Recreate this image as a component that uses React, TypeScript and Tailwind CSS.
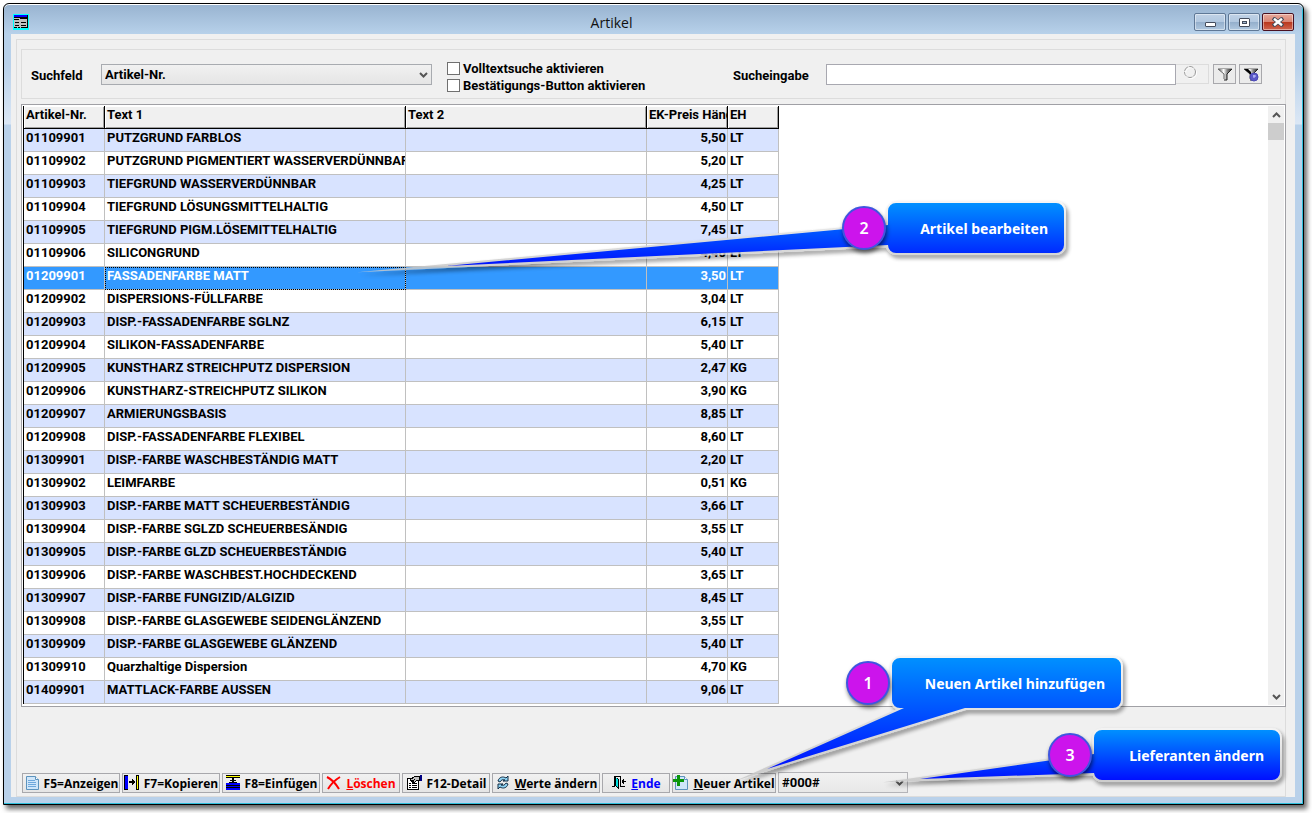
import { useState } from "react";
import type { ReactNode } from "react";

type Artikel = [nr: string, text: string, preis: string, einheit: string];

const artikel: Artikel[] = [
  ["01109901", "PUTZGRUND FARBLOS", "5,50", "LT"],
  ["01109902", "PUTZGRUND PIGMENTIERT WASSERVERDÜNNBAR", "5,20", "LT"],
  ["01109903", "TIEFGRUND WASSERVERDÜNNBAR", "4,25", "LT"],
  ["01109904", "TIEFGRUND LÖSUNGSMITTELHALTIG", "4,50", "LT"],
  ["01109905", "TIEFGRUND PIGM.LÖSEMITTELHALTIG", "7,45", "LT"],
  ["01109906", "SILICONGRUND", "4,40", "LT"],
  ["01209901", "FASSADENFARBE MATT", "3,50", "LT"],
  ["01209902", "DISPERSIONS-FÜLLFARBE", "3,04", "LT"],
  ["01209903", "DISP.-FASSADENFARBE SGLNZ", "6,15", "LT"],
  ["01209904", "SILIKON-FASSADENFARBE", "5,40", "LT"],
  ["01209905", "KUNSTHARZ STREICHPUTZ DISPERSION", "2,47", "KG"],
  ["01209906", "KUNSTHARZ-STREICHPUTZ SILIKON", "3,90", "KG"],
  ["01209907", "ARMIERUNGSBASIS", "8,85", "LT"],
  ["01209908", "DISP.-FASSADENFARBE FLEXIBEL", "8,60", "LT"],
  ["01309901", "DISP.-FARBE WASCHBESTÄNDIG MATT", "2,20", "LT"],
  ["01309902", "LEIMFARBE", "0,51", "KG"],
  ["01309903", "DISP.-FARBE MATT SCHEUERBESTÄNDIG", "3,66", "LT"],
  ["01309904", "DISP.-FARBE SGLZD SCHEUERBESÄNDIG", "3,55", "LT"],
  ["01309905", "DISP.-FARBE GLZD SCHEUERBESTÄNDIG", "5,40", "LT"],
  ["01309906", "DISP.-FARBE WASCHBEST.HOCHDECKEND", "3,65", "LT"],
  ["01309907", "DISP.-FARBE FUNGIZID/ALGIZID", "8,45", "LT"],
  ["01309908", "DISP.-FARBE GLASGEWEBE SEIDENGLÄNZEND", "3,55", "LT"],
  ["01309909", "DISP.-FARBE GLASGEWEBE GLÄNZEND", "5,40", "LT"],
  ["01309910", "Quarzhaltige Dispersion", "4,70", "KG"],
  ["01409901", "MATTLACK-FARBE AUSSEN", "9,06", "LT"],
];

const columns = ["Artikel-Nr.", "Text 1", "Text 2", "EK-Preis Händler", "EH"];

const Chevron = ({ className = "" }: { className?: string }) => (
  <svg viewBox="0 0 9 6" className={`h-[6px] w-[9px] ${className}`} aria-hidden="true">
    <path d="M1 1l3.5 3.5L8 1" fill="none" stroke="#555" strokeWidth="2" />
  </svg>
);

const TableIcon = () => (
  <svg viewBox="0 0 16 16" className="h-4 w-4" shapeRendering="crispEdges" aria-hidden="true">
    <path fill="#00ffff" d="M0 0h16v16H0z" />
    <path fill="#c0c0c0" d="M1 1h14v13H1z" />
    <path fill="#0000ff" d="M1 1h14v2H1z" />
    <path
      fill="#000"
      d="M14 1h1v13h-1zM1 3h13v1H1zM1 5h5v1H1zM7 4h7v1H7zM2 8h4v1H2zM8 8h5v1H8zM2 11h4v1H2zM8 11h5v1H8zM1 13h3v1H1zM5 13h2v1H5zM8 13h6v1H8z"
    />
  </svg>
);

const FunnelIcon = ({ marked = false }: { marked?: boolean }) => (
  <svg viewBox="0 0 16 16" className="h-4 w-4" aria-hidden="true">
    <defs>
      <linearGradient id="funnel" x1="0" x2="1">
        <stop offset="0" stopColor="#444" />
        <stop offset="0.4" stopColor="#fff" />
        <stop offset="0.65" stopColor="#888" />
        <stop offset="1" stopColor="#222" />
      </linearGradient>
    </defs>
    <path d="M1 3h14L10 8v6H7V8z" fill="url(#funnel)" />
    <path d="M1 3l6 5v5" fill="none" stroke="#666" />
    <path d="M15 3l-5 5v6H7" fill="none" stroke="#222" />
    <path d="M1 2.5h14" stroke="#a8a8a8" />
    {marked && (
      <>
        <path d="M1 3l7 6V6L5 3z" fill="#000" />
        <circle cx="11" cy="11" r="4" fill="#5a58c8" />
        <circle cx="11" cy="11" r="4" fill="none" stroke="#4a48b4" />
        <path d="M11 9v3M10 10h3" stroke="#c4c8ff" />
      </>
    )}
  </svg>
);

const PageIcon = ({ plus = false }: { plus?: boolean }) => (
  <svg viewBox="0 0 16 16" className="h-4 w-4" aria-hidden="true">
    <path d="M2.500 1.500h9l3 3v10h-12z" fill="#cfe6fa" stroke="#5d93bd" />
    <path d="M11.500 1.500v3h3" fill="#fff" stroke="#5d93bd" />
    {plus ? (
      <path d="M5.500 0v11M0 5.500h11" stroke="#0a960a" strokeWidth="3" />
    ) : (
      <path d="M4 5.500h7M4 7.500h8M4 9.500h8M4 11.500h8" stroke="#6fa8dc" />
    )}
  </svg>
);

const CopyIcon = () => (
  <svg viewBox="0 0 16 16" className="h-4 w-4" shapeRendering="crispEdges" aria-hidden="true">
    <path fill="#000" d="M0 0h4v15H0zM12 0h3v15h-3zM5 6h5v2H5zM8 4h1v6H8zM9 5h1v4H9zM10 6h1v2h-1z" />
    <path fill="#0000ff" d="M1 1h3v13H1z" />
    <path fill="#ffff00" d="M13 1h1v13h-1z" />
  </svg>
);

const InsertIcon = () => (
  <svg viewBox="0 0 16 16" className="h-4 w-4" shapeRendering="crispEdges" aria-hidden="true">
    <path fill="#000" d="M1 0h14v3H1zM7 3h2v4H7zM5 5h6v1H5zM4 7h8v1H4zM1 8h14v7H1z" />
    <path fill="#ffff00" d="M1 1h14v1H1z" />
    <path fill="#0000ff" d="M1 8h14v2H1zM1 11h14v1H1zM1 13h14v2H1z" />
  </svg>
);

const DeleteIcon = () => (
  <svg viewBox="0 0 16 16" className="h-4 w-4" aria-hidden="true">
    <path d="M1 2c4 2 9 7 12 12" fill="none" stroke="#f00" strokeWidth="2" />
    <path d="M14 2C9 5 5 9 2 14" fill="none" stroke="#f00" strokeWidth="2" />
  </svg>
);

const DetailIcon = () => (
  <svg viewBox="0 0 17 16" className="h-4 w-[17px]" shapeRendering="crispEdges" aria-hidden="true">
    <path d="M1.500 3.500h11v11h-11z" fill="#fff" stroke="#000" />
    <path d="M3 8.500h2M6 8.500h5M3 10.500h2M6 10.500h5M3 12.500h2M6 12.500h5" stroke="#000" />
    <path d="M4.500 4.500l4-3h5v4h-3l-2 2h-2l1-2-2 1z" fill="#c0c0c0" stroke="#000" />
    <path d="M14 0h2v6h-2z" fill="#000080" />
  </svg>
);

const RefreshIcon = () => (
  <svg viewBox="0 0 16 16" className="h-4 w-4" aria-hidden="true">
    <path d="M3 6c1-4 5-5 8-3l2-2v5H8l2-1C8 4 6 5 5 7z" fill="#8fd4f4" stroke="#122c44" />
    <path d="M13 9c-1 4-5 5-8 3l-2 2V9h5l-2 1c2 1 4 0 5-2z" fill="#8fd4f4" stroke="#122c44" />
  </svg>
);

const DoorIcon = () => (
  <svg viewBox="0 0 16 16" className="h-4 w-4" shapeRendering="crispEdges" aria-hidden="true">
    <path fill="#000" d="M3 1h7v1H3zM3 1h1v11H3zM9 1h1v11H9zM1 11h3v1H1zM9 11h5v1H9z" />
    <path fill="#000" d="M4 2l4 2v11l-4-4z" />
    <path fill="#00e0e0" d="M5 3l2 2v8l-2-2z" />
    <path fill="#000" d="M11 6h4v1h-4zM11 5h1v3h-1zM12 4h1v5h-1z" />
  </svg>
);

function CaptionButton({
  label,
  close = false,
  children,
}: {
  label: string;
  close?: boolean;
  children: ReactNode;
}) {
  return (
    <button
      type="button"
      aria-label={label}
      className={`flex h-[18px] w-8 items-center justify-center rounded-[2px] border shadow-[inset_0_0_0_1px_rgba(255,255,255,0.45)] ${
        close
          ? "border-[#4a1020] bg-[linear-gradient(#e8a99c_0%,#d98574_48%,#b8361c_50%,#d0644f_100%)]"
          : "border-[#5f7896] bg-[linear-gradient(#c0d2e6_0%,#b2c8e0_48%,#93aecb_50%,#b0c8e0_100%)]"
      }`}
    >
      {children}
    </button>
  );
}

function ToolButton({
  icon,
  className,
  children,
}: {
  icon: ReactNode;
  className: string;
  children: ReactNode;
}) {
  return (
    <button
      type="button"
      className={`flex h-5 items-center justify-center gap-1 whitespace-nowrap border border-[#a8a8ac] bg-linear-to-b from-[#f1f1f1] to-[#e5e5e5] font-['Open_Sans','Noto_Sans',sans-serif] text-[12px] font-bold leading-4 ${className}`}
    >
      {icon}
      <span className="pt-px">{children}</span>
    </button>
  );
}

// Speech bubble with a long pointer; shape and pointer share one outline
function CalloutShape({ id, d }: { id: string; d: string }) {
  return (
    <g>
      <path d={d} fill="none" stroke={`url(#${id}-rim)`} strokeWidth="4" strokeMiterlimit="100" opacity="0.85" filter="url(#drop)" />
      <path d={d} fill={`url(#${id}-fill)`} />
      <defs>
        <linearGradient id={`${id}-fill`} x1="0" y1="0" x2="0" y2="1">
          <stop offset="0" stopColor="#0090ff" />
          <stop offset="1" stopColor="#0010ff" />
        </linearGradient>
        <linearGradient id={`${id}-rim`} x1="0" y1="0" x2="0" y2="1">
          <stop offset="0" stopColor="#f4f4f4" />
          <stop offset="1" stopColor="#c8c8c8" />
        </linearGradient>
      </defs>
    </g>
  );
}

function Callout({
  nr,
  box,
  badge,
  children,
}: {
  nr: number;
  box: string;
  badge: string;
  children: ReactNode;
}) {
  return (
    <>
      <div
        className={`absolute flex h-[50px] items-center justify-end pr-4 text-[14px] font-bold whitespace-nowrap text-white ${box}`}
      >
        {children}
      </div>
      <div
        className={`absolute flex size-11 items-center justify-center rounded-full border-2 border-[#3f55e0] bg-[#cc14ec] text-[16px] font-semibold text-white shadow-[1px_3px_4px_rgba(0,0,0,0.55)] ${badge}`}
      >
        {nr}
      </div>
    </>
  );
}

export default function App() {
  const [suchfeld, setSuchfeld] = useState("Artikel-Nr.");
  const [eingabe, setEingabe] = useState("");
  const [selected, setSelected] = useState("01209901");

  return (
    <div className="relative flex min-h-screen flex-col bg-white pt-[3px] pr-2 pb-2 pl-[3px] font-['Roboto',sans-serif] text-[13px] font-bold text-black">
      <div className="flex flex-1 flex-col rounded-t-[6px] border border-black bg-[linear-gradient(#98b3d0_0px,#b7d1ea_30px,#b9d1ea_60px,#dbe7f5_120px,#b9d1ea_121px)] shadow-[inset_0_1px_0_#fff,inset_-1px_-1px_0_#2fc0dc,3px_4px_5px_rgba(0,0,0,0.6)]">
        {/* Title bar */}
        <header className="flex h-[30px] items-center pt-[6px] pr-[9px] pl-[9px]">
          <TableIcon />
          <h1 className="flex-1 pt-[2px] text-center font-['Open_Sans',sans-serif] text-[14px] font-normal leading-5 text-[#111]">
            Artikel
          </h1>
          <div className="flex gap-[2px]">
            <CaptionButton label="Minimieren">
              <span className="mt-1 h-[5px] w-[11px] rounded-[1px] border border-[#444c5c] bg-white" />
            </CaptionButton>
            <CaptionButton label="Maximieren">
              <span className="flex h-[9px] w-[11px] items-center justify-center rounded-[1px] border border-[#444c5c] bg-white">
                <span className="h-[3px] w-[5px] border border-[#444c5c] bg-[#a0b8d0]" />
              </span>
            </CaptionButton>
            <CaptionButton label="Schließen" close>
              <svg viewBox="0 0 12 10" className="h-[10px] w-3" aria-hidden="true">
                <path d="M1 1l10 8M11 1L1 9" stroke="#444c5c" strokeWidth="4" />
                <path d="M2 1.800l8 6.400M10 1.800L2 8.200" stroke="#fff" strokeWidth="2.400" />
              </svg>
            </CaptionButton>
          </div>
        </header>

        <main className="mr-2 mb-[7px] ml-[7px] flex flex-1 flex-col bg-[#f0f0f0] pt-[5px] pr-[9px] pl-[5px]">
          <div className="flex flex-1 flex-col border border-[#dcdcdc] pt-[9px]">
            {/* Search bar */}
            <div className="mr-1 ml-1 flex h-[50px] items-center border border-[#dcdcdc] pr-[18px] pl-[9px]">
              <label htmlFor="suchfeld" className="w-[70px] pt-1">
                Suchfeld
              </label>
              <div className="relative w-[331px]">
                <select
                  id="suchfeld"
                  value={suchfeld}
                  onChange={(e) => setSuchfeld(e.target.value)}
                  className="block h-[21px] w-full appearance-none border border-[#a8abb0] bg-linear-to-b from-[#f1f1f1] to-[#e5e5e5] pt-px pl-[3px] leading-4"
                >
                  <option>Artikel-Nr.</option>
                  <option>Text 1</option>
                  <option>Text 2</option>
                </select>
                <Chevron className="pointer-events-none absolute top-2 right-1" />
              </div>
              <div className="ml-[15px] flex w-[286px] flex-col gap-px pt-[6px]">
                <label className="flex h-4 items-center gap-[3px]">
                  <input type="checkbox" className="size-[13px] appearance-none border border-[#707070] bg-white checked:bg-[#3399ff]" />
                  Volltextsuche aktivieren
                </label>
                <label className="flex h-4 items-center gap-[3px]">
                  <input type="checkbox" className="size-[13px] appearance-none border border-[#707070] bg-white checked:bg-[#3399ff]" />
                  Bestätigungs-Button aktivieren
                </label>
              </div>
              <label htmlFor="eingabe" className="w-[93px] pt-1">
                Sucheingabe
              </label>
              <input
                id="eingabe"
                value={eingabe}
                onChange={(e) => setEingabe(e.target.value)}
                className="h-[21px] min-w-0 flex-1 border border-[#a8a8b0] bg-white px-1"
              />
              <button type="button" aria-label="Suchen" className="flex h-5 w-[33px] items-center justify-center border border-l-0 border-[#dcdcdc] pr-1">
                <svg viewBox="0 0 14 14" className="mb-1 h-[14px] w-[14px]" aria-hidden="true">
                  <circle cx="8" cy="8" r="5.500" fill="none" stroke="#fff" />
                  <circle cx="7" cy="7" r="5.500" fill="none" stroke="#999" strokeDasharray="5 1" />
                </svg>
              </button>
              <button type="button" aria-label="Filter" className="ml-1 flex h-5 w-[23px] items-center justify-center border border-[#a8a8ac] bg-[#ebebeb]">
                <FunnelIcon />
              </button>
              <button type="button" aria-label="Filter bearbeiten" className="ml-[3px] flex h-5 w-[23px] items-center justify-center border border-[#a8a8ac] bg-[#ebebeb]">
                <FunnelIcon marked />
              </button>
            </div>

            {/* Article list */}
            <div className="-mr-px mt-[5px] ml-1 flex justify-between border border-[#a0a0a5] bg-white p-px">
              <table className="mb-px w-[756px] table-fixed border-separate border-spacing-0 border-l border-black">
                <colgroup>
                  <col className="w-[81px]" />
                  <col className="w-[301px]" />
                  <col className="w-[241px]" />
                  <col className="w-[81px]" />
                  <col className="w-[51px]" />
                </colgroup>
                <thead>
                  <tr>
                    {columns.map((c) => (
                      <th
                        key={c}
                        className="h-[23px] overflow-hidden border-r border-b border-black bg-[#f0f0f0] p-0 pl-[2px] text-left align-top leading-[18px] font-bold whitespace-nowrap shadow-[inset_1px_1px_0_#fff,inset_-1px_-1px_0_#a0a0a0]"
                      >
                        {c}
                      </th>
                    ))}
                  </tr>
                </thead>
                <tbody>
                  {artikel.map(([nr, text, preis, einheit], i) => {
                    const active = nr === selected;
                    const cell =
                      "h-[23px] overflow-hidden border-r border-b border-[#c0c0c0] p-0 align-top leading-[18px] whitespace-nowrap";
                    return (
                      <tr
                        key={nr}
                        onClick={() => setSelected(nr)}
                        className={active ? "bg-[#3399ff] text-white" : i % 2 === 0 ? "bg-[#d8e3ff]" : "bg-white"}
                      >
                        <td className={`${cell} pl-[2px]`}>{nr}</td>
                        <td className={`${cell} pl-[2px] ${active ? "outline-1 -outline-offset-1 outline-dotted outline-black" : ""}`}>
                          {text}
                        </td>
                        <td className={cell} />
                        <td className={`${cell} pr-px text-right`}>{preis}</td>
                        <td className={`${cell} pl-[2px]`}>{einheit}</td>
                      </tr>
                    );
                  })}
                </tbody>
              </table>
              <div className="flex w-4 flex-col items-center bg-[#f0f0f0]">
                <button type="button" aria-label="Nach oben" className="flex h-[17px] w-full items-center justify-center">
                  <Chevron className="rotate-180" />
                </button>
                <div className="h-[17px] w-full bg-[#cdcdcd]" />
                <button type="button" aria-label="Nach unten" className="mt-auto flex h-[17px] w-full items-center justify-center">
                  <Chevron />
                </button>
              </div>
            </div>

            {/* Actions */}
            <footer className="mt-auto flex items-end gap-[2px] pt-8 pb-[3px] pl-[5px]">
              <ToolButton icon={<PageIcon />} className="w-[98px]">F5=Anzeigen</ToolButton>
              <ToolButton icon={<CopyIcon />} className="w-[98px]">F7=Kopieren</ToolButton>
              <ToolButton icon={<InsertIcon />} className="w-[98px]">F8=Einfügen</ToolButton>
              <ToolButton icon={<DeleteIcon />} className="w-[78px] text-[#ff0000]">
                <u>L</u>öschen
              </ToolButton>
              <ToolButton icon={<DetailIcon />} className="w-[88px]">F12-Detail</ToolButton>
              <ToolButton icon={<RefreshIcon />} className="w-[108px]">
                <u>W</u>erte ändern
              </ToolButton>
              <ToolButton icon={<DoorIcon />} className="w-[68px] text-[#0000ff]">
                <u>E</u>nde
              </ToolButton>
              <ToolButton icon={<PageIcon plus />} className="w-[104px]">
                <u>N</u>euer Artikel
              </ToolButton>
              <div className="relative w-[130px]">
                <select
                  aria-label="Lieferant"
                  className="block h-[21px] w-full appearance-none border border-[#b4b4b8] bg-linear-to-b from-[#f1f1f1] to-[#e8e8e8] pl-[3px] leading-4"
                >
                  <option>#000#</option>
                </select>
                <Chevron className="pointer-events-none absolute top-2 right-1" />
              </div>
            </footer>
          </div>
        </main>
      </div>

      {/* Numbered hints pinned over the window */}
      <div className="pointer-events-none absolute top-0 left-0 h-[813px] w-[1312px] font-['Noto_Sans',sans-serif]">
        <svg viewBox="0 0 1312 813" className="absolute top-0 left-0 h-[813px] w-[1312px]" aria-hidden="true">
          <defs>
            <filter id="drop" x="-30%" y="-20%" width="140%" height="150%">
              <feDropShadow dx="2" dy="3" stdDeviation="2" floodColor="#000" floodOpacity="0.55" />
            </filter>
          </defs>
          <CalloutShape
            id="edit"
            d="M896 203H1056a8 8 0 0 1 8 8V245a8 8 0 0 1 -8 8H896a8 8 0 0 1 -8 -8L446 266L888 225V211a8 8 0 0 1 8 -8z"
          />
          <CalloutShape
            id="new"
            d="M900 658H1113a8 8 0 0 1 8 8V700a8 8 0 0 1 -8 8H965L767 769L904 708H900a8 8 0 0 1 -8 -8V666a8 8 0 0 1 8 -8z"
          />
          <CalloutShape
            id="supplier"
            d="M1102 730H1272a8 8 0 0 1 8 8V772a8 8 0 0 1 -8 8H1102a8 8 0 0 1 -8 -7L920 779L1094 754V738a8 8 0 0 1 8 -8z"
          />
        </svg>
        <Callout nr={2} box="top-[203px] left-[888px] w-[176px]" badge="top-[206px] left-[842px]">
          Artikel bearbeiten
        </Callout>
        <Callout nr={1} box="top-[658px] left-[892px] w-[229px]" badge="top-[661px] left-[846px]">
          Neuen Artikel hinzufügen
        </Callout>
        <Callout nr={3} box="top-[730px] left-[1094px] w-[186px]" badge="top-[733px] left-[1048px]">
          Lieferanten ändern
        </Callout>
      </div>
    </div>
  );
}
